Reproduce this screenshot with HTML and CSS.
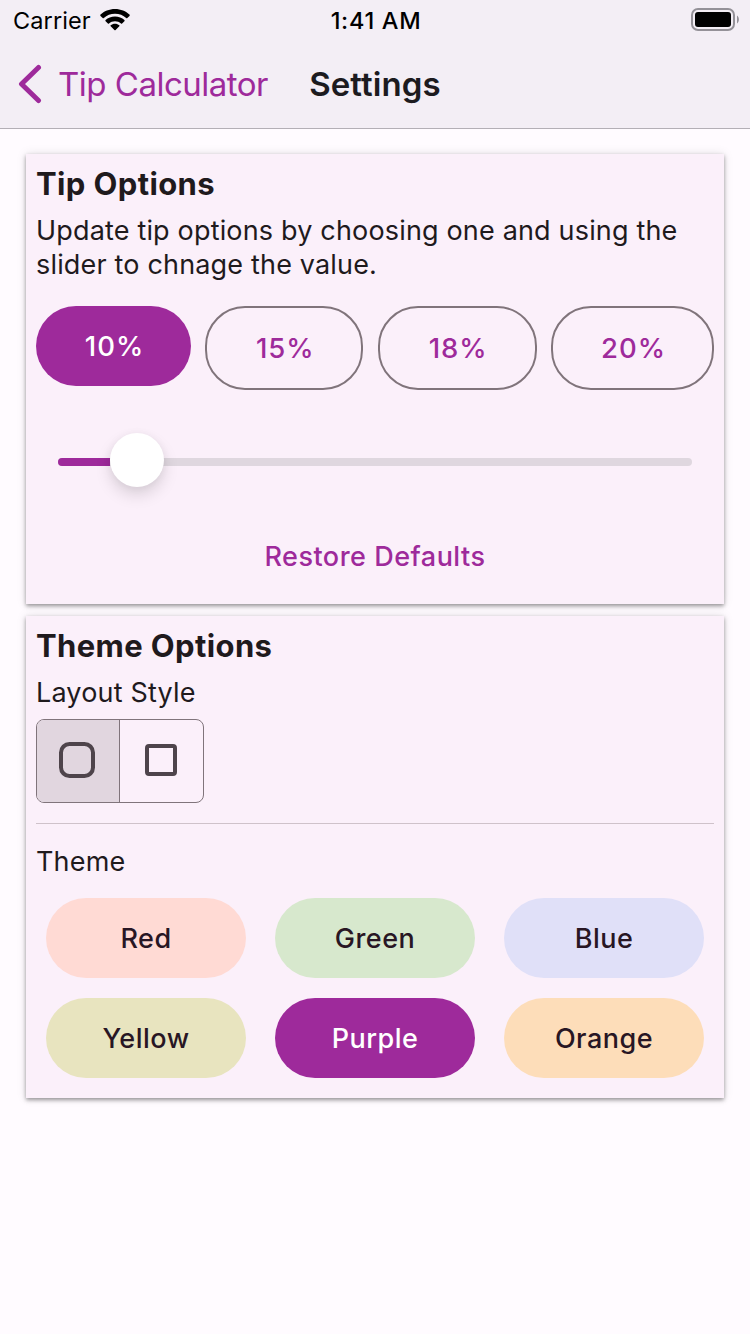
FILE: index.html
```html
<!DOCTYPE html>
<html lang="en">
<head>
<meta charset="utf-8">
<title>Settings</title>
<link rel="stylesheet" href="styles.css">
</head>
<body>
<header class="header">
  <div class="status">
    <div class="status-left">
      <span class="carrier">Carrier</span>
      <svg class="wifi" width="30" height="22" viewBox="0 0 30 22">
        <path d="M15 0C9.200 0 4 2.200.500 5.600c-.4.400-.4.900 0 1.300l2.200 2.200c.3.300.8.300 1.100 0C6.800 6.200 10.700 4.700 15 4.700s8.200 1.500 11.200 4.400c.3.300.8.300 1.100 0l2.200-2.200c.4-.4.400-.9 0-1.300C26 2.200 20.800 0 15 0z"/>
        <path d="M15 7.400c-3.700 0-7 1.400-9.400 3.600-.4.400-.4.900 0 1.200l2.300 2.300c.3.300.8.300 1.100 0 1.600-1.500 3.700-2.300 6-2.300s4.400.8 6 2.300c.3.300.8.300 1.100 0l2.300-2.300c.4-.3.400-.8 0-1.200C22 8.800 18.700 7.400 15 7.400z"/>
        <path d="M15 14.800c-1.700 0-3.200.6-4.300 1.500-.4.300-.4.700 0 1l3.700 3.700c.3.300.9.300 1.200 0l3.700-3.700c.4-.3.400-.7 0-1-1.100-.9-2.600-1.500-4.300-1.500z"/>
      </svg>
    </div>
    <span class="time">1:41 AM</span>
    <svg class="battery" width="48" height="24" viewBox="0 0 48 24">
      <rect x="1" y="1" width="42" height="21" rx="6" fill="none" stroke="#949198" stroke-width="2"/>
      <rect x="4" y="4" width="36" height="15" rx="3"/>
      <path d="M46 7.500c2.500 1.500 2.500 6.500 0 8z" fill="#949198"/>
    </svg>
  </div>
  <nav class="nav">
    <a class="back">
      <svg class="chevron" width="24" height="40" viewBox="0 0 24 40"><path d="M20.500 3.500L3.500 20l17 16.500" fill="none" stroke="#9e2a9b" stroke-width="5" stroke-linecap="round" stroke-linejoin="round"/></svg>
      <span class="back-label">Tip Calculator</span>
    </a>
    <h1 class="title">Settings</h1>
    <span></span>
  </nav>
</header>
<main class="content">
  <section class="card card-tips">
    <h2 class="heading">Tip Options</h2>
    <p class="text">Update tip options by choosing one and using the<br>slider to chnage the value.</p>
    <div class="tips">
      <button class="button tip tip-active">10%</button>
      <button class="button tip">15%</button>
      <button class="button tip">18%</button>
      <button class="button tip">20%</button>
    </div>
    <div class="slider"><div class="fill"></div><div class="thumb"></div></div>
    <button class="button restore">Restore Defaults</button>
  </section>
  <section class="card card-theme">
    <h2 class="heading">Theme Options</h2>
    <p class="text">Layout Style</p>
    <div class="segments">
      <div class="segment segment-active">
        <svg width="36" height="36" viewBox="0 0 36 36"><rect x="2" y="2" width="32" height="32" rx="8.500" fill="none" stroke="#4e444b" stroke-width="4"/></svg>
      </div>
      <div class="segment">
        <svg width="32" height="32" viewBox="0 0 32 32"><rect x="2" y="2" width="28" height="28" rx="2" fill="none" stroke="#4e444b" stroke-width="4"/></svg>
      </div>
    </div>
    <div class="divider"></div>
    <p class="text theme-label">Theme</p>
    <div class="themes">
      <button class="button theme red">Red</button>
      <button class="button theme green">Green</button>
      <button class="button theme blue">Blue</button>
      <button class="button theme yellow">Yellow</button>
      <button class="button theme purple">Purple</button>
      <button class="button theme orange">Orange</button>
    </div>
  </section>
</main>
</body>
</html>
```
FILE: styles.css
```css
* { box-sizing: border-box; }
body {
  margin: 0;
  height: 1334px;
  background: #fffbff;
  color: #1f1a1d;
  font-family: Inter, "Liberation Sans", sans-serif;
}
h1, h2, p { margin: 0; }
svg { display: block; flex: none; }
.header {
  height: 129px;
  background: #f3eef5;
  border-bottom: 1px solid #b3afb6;
}
.status {
  display: grid;
  grid-template-columns: 1fr auto 1fr;
  align-items: center;
  height: 40px;
  padding: 0 11px 0 13px;
  color: #000;
  font-size: 23.5px;
  line-height: 38px;
}
.status-left { display: flex; align-items: center; gap: 9px; }
.carrier { padding-top: 2px; letter-spacing: 0.1px; }
.time { padding-top: 2px; font-weight: 500; letter-spacing: 0.7px; }
.battery { justify-self: end; }
.nav {
  display: grid;
  grid-template-columns: 1fr auto 1fr;
  align-items: center;
  height: 88px;
  padding: 0 18px;
}
.back { display: flex; align-items: center; gap: 16px; color: #9e2a9b; }
.back-label { font-size: 33px; letter-spacing: -0.5px; white-space: nowrap; }
.title { font-size: 33px; font-weight: 600; letter-spacing: 0.1px; color: #1c1b1f; }
.content { display: flex; flex-direction: column; gap: 12px; padding: 25px 26px; }
.card {
  display: flex;
  flex-direction: column;
  padding: 10px;
  background: #fbf0fa;
  box-shadow: 0 2px 4px rgba(0, 0, 0, 0.38), 0 0 10px rgba(0, 0, 0, 0.1);
}
.card-tips { height: 450px; }
.card-theme { height: 482px; }
.heading { font-size: 31px; font-weight: 700; line-height: 40px; letter-spacing: 0.38px; }
.text { font-size: 27px; line-height: 34px; margin-top: 10px; letter-spacing: 0.17px; white-space: nowrap; }
.button {
  display: flex;
  align-items: center;
  justify-content: center;
  padding: 2px 0 0;
  border: 0;
  background: none;
  color: #9e2a9b;
  font: 500 27px/40px Inter, "Liberation Sans", sans-serif;
  letter-spacing: 0.5px;
}
.tips {
  display: grid;
  grid-template-columns: 155px 158px 159px 163px;
  justify-content: space-between;
  align-items: start;
  margin-top: 24px;
}
.tip {
  height: 84px;
  padding: 0 0 0 2px;
  border: 2px solid #80747b;
  border-radius: 40px;
  font-size: 27.5px;
  letter-spacing: 1px;
}
.tip-active { height: 80px; border: 0; background: #9e2a9b; color: #fff; }
.slider {
  display: flex;
  align-items: center;
  height: 8px;
  margin: 68px 22px 0;
  border-radius: 4px;
  background: #dfd7df;
}
.fill { width: 52px; height: 8px; border-radius: 4px 0 0 4px; background: #9e2a9b; }
.thumb {
  width: 54px;
  height: 54px;
  margin-top: -4px;
  border-radius: 50%;
  background: #fff;
  box-shadow: 0 8px 16px rgba(0, 0, 0, 0.13), 0 1px 8px rgba(0, 0, 0, 0.05);
}
.restore { align-self: center; margin-top: 69px; }
.segments {
  display: grid;
  grid-template-columns: 83px 83px;
  width: 168px;
  height: 84px;
  margin-top: 9px;
  overflow: hidden;
  border: 1px solid #80747b;
  border-radius: 8px;
}
.segment { display: flex; align-items: center; justify-content: center; padding: 0 1px 2px 0; }
.segment-active { padding-right: 2px; border-right: 1px solid #80747b; background: #e1d6df; }
.divider { height: 1px; margin-top: 20px; background: #cfc2ca; }
.theme-label { margin-top: 21px; }
.themes {
  display: grid;
  grid-template-columns: repeat(3, 200px);
  justify-content: space-between;
  row-gap: 20px;
  margin-top: 19px;
  padding: 0 10px;
}
.theme { height: 80px; border-radius: 40px; color: #281624; }
.red { background: #ffdad4; }
.green { background: #d7e8cd; }
.blue { background: #e0e0f8; }
.yellow { background: #e8e4bf; }
.purple { background: #9e2a9b; color: #fff; }
.orange { background: #fdddb9; }
```
